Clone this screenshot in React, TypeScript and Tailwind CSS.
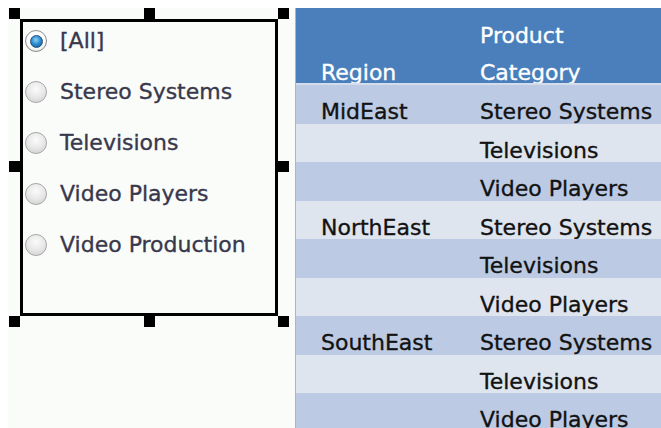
const options = ["[All]", "Stereo Systems", "Televisions", "Video Players", "Video Production"];

const rows: [string, string][] = [
  ["MidEast", "Stereo Systems"],
  ["", "Televisions"],
  ["", "Video Players"],
  ["NorthEast", "Stereo Systems"],
  ["", "Televisions"],
  ["", "Video Players"],
  ["SouthEast", "Stereo Systems"],
  ["", "Televisions"],
  ["", "Video Players"],
];

function Radio({ checked }: { checked: boolean }) {
  if (checked) {
    return (
      <span className="flex h-[22px] w-[22px] shrink-0 items-center justify-center rounded-full border border-[#8c8c8c] bg-[radial-gradient(circle_at_50%_40%,#ffffff_55%,#c9c9c9_100%)]">
        <span className="h-[13px] w-[13px] rounded-full border border-[#1e4f7a] bg-[radial-gradient(circle_at_45%_35%,#8fd2f6_0%,#2f8fd2_45%,#0b4f8c_100%)]" />
      </span>
    );
  }
  return (
    <span className="h-[22px] w-[22px] shrink-0 rounded-full border border-[#a4a4a4] bg-[radial-gradient(circle_at_50%_35%,#fbfbfb_0%,#e6e6e6_55%,#c4c4c4_100%)] shadow-[inset_0_0_1px_#ffffff]" />
  );
}

function Handle({ className }: { className: string }) {
  return <span className={`absolute h-[11px] w-[11px] bg-black ${className}`} />;
}

export default function App() {
  return (
    <div
      className="flex h-[428px] w-[661px] overflow-hidden bg-white pl-[8px] pt-[8px] text-[22px] [-webkit-text-stroke:0.35px_currentColor]"
      style={{ fontFamily: '"DejaVu Sans", Verdana, sans-serif' }}
    >
      {/* filter panel */}
      <div className="w-[287px] shrink-0 bg-[#fafcfa] pl-[12px] pt-[11px]">
        <div className="relative h-[297px] w-[258px] border-[3px] border-black bg-[#fafcfa]">
          <Handle className="-left-[14px] -top-[14px]" />
          <Handle className="left-[121px] -top-[14px]" />
          <Handle className="-right-[14px] -top-[14px]" />
          <Handle className="-left-[14px] top-[139px]" />
          <Handle className="-right-[14px] top-[139px]" />
          <Handle className="-left-[14px] -bottom-[14px]" />
          <Handle className="left-[121px] -bottom-[14px]" />
          <Handle className="-right-[14px] -bottom-[14px]" />

          <ul className="flex flex-col gap-[25px] pl-[2px] pt-[6px]">
            {options.map((o, i) => (
              <li key={o} className="flex items-center gap-[13px] leading-[26px] text-[#38384c]">
                <Radio checked={i === 0} />
                <span>{o}</span>
              </li>
            ))}
          </ul>
        </div>
      </div>

      {/* report table */}
      <div className="flex-1 border-l border-[#9fb8d8]">
        <div className="grid h-[77px] grid-cols-[159px_1fr] border-b-2 border-[#d3ddec] bg-[#4a7fbb] text-white">
          <div className="overflow-hidden pl-[25px] pt-[46px] leading-[37px]">Region</div>
          <div className="overflow-hidden whitespace-nowrap pl-[25px] pt-[9px] leading-[37px]">
            Product
            <br />
            Category
          </div>
        </div>
        {rows.map(([region, cat], i) => (
          <div
            key={i}
            className={`grid h-[38.5px] grid-cols-[159px_1fr] overflow-hidden whitespace-nowrap leading-[26px] text-[#121212] ${
              i % 2 === 0 ? "bg-[#bccbe3]" : "bg-[#dfe5ee]"
            }`}
          >
            <div className="pl-[25px] pt-[14px]">{region}</div>
            <div className="pl-[25px] pt-[14px]">{cat}</div>
          </div>
        ))}
      </div>
    </div>
  );
}
